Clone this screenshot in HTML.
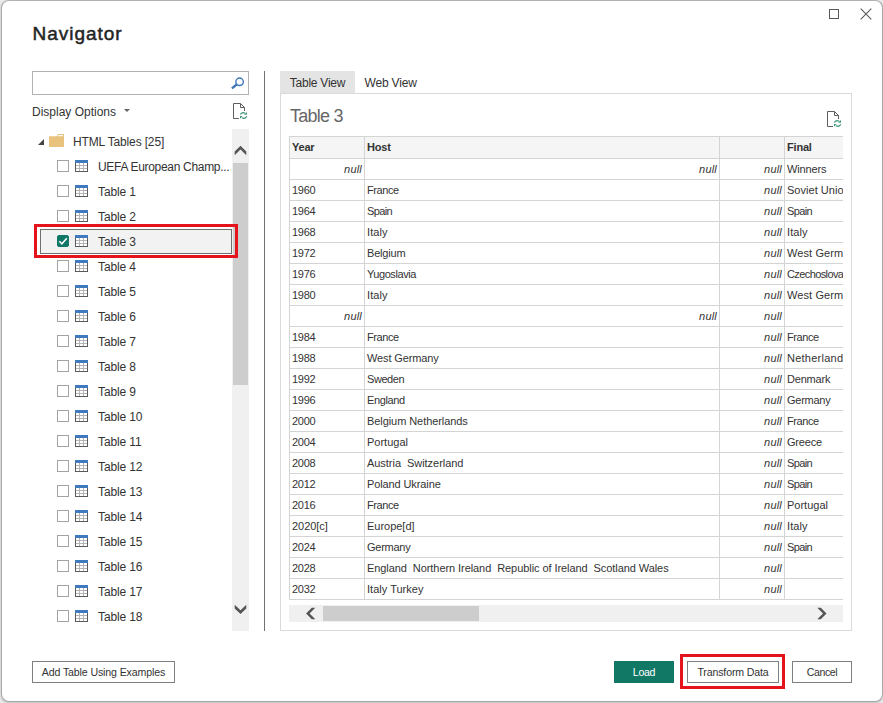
<!DOCTYPE html>
<html lang="en"><head><meta charset="utf-8"><title>Navigator</title>
<style>
html,body{margin:0;padding:0;}
body{width:883px;height:703px;overflow:hidden;background:#ececec;font-family:"Liberation Sans",sans-serif;font-size:12px;color:#333;position:relative;}
.win{position:absolute;left:1px;top:0;width:880px;height:700px;background:#fff;border:1px solid #a9a9a9;border-top-color:#b2b2b2;border-radius:8px;box-shadow:0 1px 3px rgba(0,0,0,.22);}
.c{position:absolute;left:0;top:0;width:883px;height:703px;}
.c>*{position:absolute;}
.title{left:32.6px;top:22px;font-size:19px;line-height:24px;color:#252525;letter-spacing:0.95px;-webkit-text-stroke:0.5px #252525;}
.maxi{left:829px;top:9px;}
.closei{left:860px;top:8px;}
.search{left:32px;top:71px;width:215px;height:22px;border:1px solid #b2b2b2;background:#fff;}
.search svg{position:absolute;left:197px;top:4px;}
.dispopt{left:32px;top:104px;line-height:16px;font-size:12px;color:#333;letter-spacing:0;}
.caret{left:123.5px;top:109px;width:0;height:0;border-left:3px solid transparent;border-right:3px solid transparent;border-top:3px solid #666;}
.refresh1{left:233px;top:103px;}
.tri{left:38px;top:139px;width:0;height:0;border-left:6px solid transparent;border-bottom:6px solid #444;}
.folder{left:49px;top:134px;}
.tl{line-height:24px;font-size:12px;color:#333;white-space:nowrap;letter-spacing:-0.12px;}
.cb{left:57px;width:10px;height:10px;border:1px solid #a3a3a3;background:#fff;}
.cb.on{background:#117865;border-color:#117865;border-radius:2px;}
.cb svg{position:absolute;left:-1px;top:-1px;}
.ti{left:75px;}
.selred{left:34px;top:224px;width:198px;height:28px;border:3px solid #e5141c;z-index:5;}
.selbg{left:40px;top:229px;width:190px;height:23px;border:1px solid #6f6f6f;background:#f2f2f2;}
.vsb{left:232px;top:129px;width:17px;height:502px;background:#f0f0f0;}
.vthumb{position:absolute;left:1px;top:34px;width:15px;height:222px;background:#cdcdcd;}
.vup{position:absolute;left:2px;top:16px;}
.vdn{position:absolute;left:2px;top:475px;}
.vdiv{left:264px;top:71px;width:1px;height:560px;background:#707070;}
.tab1{left:280px;top:71px;width:75px;height:22px;background:#e4e4e4;line-height:25px;text-align:center;font-size:12px;color:#333;letter-spacing:-0.25px;}
.tab2{left:364.5px;top:71px;height:22px;line-height:25px;font-size:12px;color:#333;letter-spacing:-0.18px;}
.panel{left:280px;top:93px;width:570px;height:536px;border:1px solid #dadada;}
.ptitle{left:290px;top:104px;font-size:18px;line-height:24px;color:#666;letter-spacing:-0.76px;}
.refresh2{left:827px;top:111px;}
.grid{left:289px;top:136px;width:554px;height:464px;overflow:hidden;}
.grid table{border-collapse:collapse;table-layout:fixed;width:640px;}
.grid th,.grid td{border:1px solid #d4d4d4;height:20px;padding:0 2px;font-size:11px;letter-spacing:-0.2px;line-height:20px;white-space:nowrap;overflow:hidden;text-align:left;color:#333;font-weight:normal;}
.grid th{background:#f5f5f5;font-weight:bold;height:21px;line-height:21px;}
.grid .c1{width:70px;}.grid .c2{width:350px;}.grid .c3{width:60px;}.grid .c4{width:140px;}
.grid td.n{text-align:right;font-style:italic;letter-spacing:0.2px;padding-right:2px;}
.hsb{left:289px;top:605px;width:554px;height:17px;background:#f0f0f0;}
.hthumb{position:absolute;left:34px;top:1px;width:156px;height:15px;background:#cdcdcd;}
.hl{position:absolute;left:17px;top:2px;}
.hr{position:absolute;left:528px;top:2px;}
.btn{top:661px;height:22px;border:1px solid #7f7f7f;background:#fff;line-height:20px;text-align:center;font-size:10.6px;letter-spacing:-0.45px;color:#333;white-space:nowrap;box-sizing:border-box;}
.btn.load{background:#117865;border-color:#117865;color:#fff;}
.redbox{left:680px;top:654px;width:99px;height:29px;border:3px solid #e5141c;}

</style></head>
<body>
<div class="win"></div>
<div class="c">
<div class="title">Navigator</div>
<svg class="maxi" width="11" height="11" viewBox="0 0 11 11"><rect x="0.5" y="0.5" width="9" height="9" fill="none" stroke="#5a5a5a" stroke-width="1"/></svg>
<svg class="closei" width="12" height="12" viewBox="0 0 12 12"><path d="M0.7 0.7 L11.3 11.3 M11.3 0.7 L0.7 11.3" fill="none" stroke="#5a5a5a" stroke-width="1.1"/></svg>
<div class="search"><svg width="18" height="14" viewBox="0 0 18 14"><circle cx="9.6" cy="5.8" r="3.75" fill="none" stroke="#3d78b8" stroke-width="1.4"/><path d="M6.7 8.5 L1.9 12.3" stroke="#3d78b8" stroke-width="2.3" stroke-linecap="butt"/></svg></div>
<div class="dispopt">Display Options</div><div class="caret"></div>
<svg class="refresh1" width="16" height="17" viewBox="0 0 16 17"><path d="M5.9 15.5 H0.5 V0.5 H7.5 L11.5 4.5 V8" fill="none" stroke="#5e5e5e" stroke-width="1"/><path d="M7.5 0.5 V4.5 H11.5" fill="none" stroke="#5e5e5e" stroke-width="1"/><path d="M7.3 11.5 Q9.3 8.5 12.2 10.2" fill="none" stroke="#3f9877" stroke-width="1.2"/><path d="M14 9 V11.7 H11.1 Z" fill="#3f9877"/><path d="M13.8 13.3 Q11.8 16.3 8.9 14.7" fill="none" stroke="#3f9877" stroke-width="1.2"/><path d="M7 15.8 V13.1 H9.7 Z" fill="#3f9877"/></svg>
<div class="tri"></div>
<svg class="folder" width="15" height="13" viewBox="0 0 15 13"><path d="M0 2.3 H8 L9 0 H15 V13 H0 Z" fill="#e9c27e"/><path d="M9.6 1 H14 V2.3 H9 Z" fill="#fff"/></svg>
<div class="tl" style="left:73px;top:130px;letter-spacing:-0.14px">HTML Tables [25]</div>
<div class="cb" style="top:160px"></div>
<svg class="ti" style="top:160px" width="13" height="12" viewBox="0 0 13 12"><rect x="0" y="0" width="13" height="12" fill="#5a5a5a"/><rect x="1" y="3" width="11" height="8" fill="#b4b4b4"/><rect x="0" y="0" width="13" height="3" fill="#3f7abf"/><path d="M1 3h3v2h-3z M5 3h3v2h-3z M9 3h3v2h-3z M1 6h3v2h-3z M5 6h3v2h-3z M9 6h3v2h-3z M1 9h3v2h-3z M5 9h3v2h-3z M9 9h3v2h-3z" fill="#fff"/></svg>
<div class="tl" style="left:98px;top:155px;letter-spacing:-0.31px">UEFA European Champ...</div>
<div class="cb" style="top:185px"></div>
<svg class="ti" style="top:185px" width="13" height="12" viewBox="0 0 13 12"><rect x="0" y="0" width="13" height="12" fill="#5a5a5a"/><rect x="1" y="3" width="11" height="8" fill="#b4b4b4"/><rect x="0" y="0" width="13" height="3" fill="#3f7abf"/><path d="M1 3h3v2h-3z M5 3h3v2h-3z M9 3h3v2h-3z M1 6h3v2h-3z M5 6h3v2h-3z M9 6h3v2h-3z M1 9h3v2h-3z M5 9h3v2h-3z M9 9h3v2h-3z" fill="#fff"/></svg>
<div class="tl" style="left:98px;top:180px">Table 1</div>
<div class="cb" style="top:210px"></div>
<svg class="ti" style="top:210px" width="13" height="12" viewBox="0 0 13 12"><rect x="0" y="0" width="13" height="12" fill="#5a5a5a"/><rect x="1" y="3" width="11" height="8" fill="#b4b4b4"/><rect x="0" y="0" width="13" height="3" fill="#3f7abf"/><path d="M1 3h3v2h-3z M5 3h3v2h-3z M9 3h3v2h-3z M1 6h3v2h-3z M5 6h3v2h-3z M9 6h3v2h-3z M1 9h3v2h-3z M5 9h3v2h-3z M9 9h3v2h-3z" fill="#fff"/></svg>
<div class="tl" style="left:98px;top:205px">Table 2</div>
<div class="selred"></div><div class="selbg"></div>
<div class="cb on" style="top:235px"><svg width="12" height="12" viewBox="0 0 12 12"><path d="M2.3 6.2 L4.9 8.8 L9.8 3.2" fill="none" stroke="#fff" stroke-width="1.5"/></svg></div>
<svg class="ti" style="top:235px" width="13" height="12" viewBox="0 0 13 12"><rect x="0" y="0" width="13" height="12" fill="#5a5a5a"/><rect x="1" y="3" width="11" height="8" fill="#b4b4b4"/><rect x="0" y="0" width="13" height="3" fill="#3f7abf"/><path d="M1 3h3v2h-3z M5 3h3v2h-3z M9 3h3v2h-3z M1 6h3v2h-3z M5 6h3v2h-3z M9 6h3v2h-3z M1 9h3v2h-3z M5 9h3v2h-3z M9 9h3v2h-3z" fill="#fff"/></svg>
<div class="tl" style="left:98px;top:230px">Table 3</div>
<div class="cb" style="top:260px"></div>
<svg class="ti" style="top:260px" width="13" height="12" viewBox="0 0 13 12"><rect x="0" y="0" width="13" height="12" fill="#5a5a5a"/><rect x="1" y="3" width="11" height="8" fill="#b4b4b4"/><rect x="0" y="0" width="13" height="3" fill="#3f7abf"/><path d="M1 3h3v2h-3z M5 3h3v2h-3z M9 3h3v2h-3z M1 6h3v2h-3z M5 6h3v2h-3z M9 6h3v2h-3z M1 9h3v2h-3z M5 9h3v2h-3z M9 9h3v2h-3z" fill="#fff"/></svg>
<div class="tl" style="left:98px;top:255px">Table 4</div>
<div class="cb" style="top:285px"></div>
<svg class="ti" style="top:285px" width="13" height="12" viewBox="0 0 13 12"><rect x="0" y="0" width="13" height="12" fill="#5a5a5a"/><rect x="1" y="3" width="11" height="8" fill="#b4b4b4"/><rect x="0" y="0" width="13" height="3" fill="#3f7abf"/><path d="M1 3h3v2h-3z M5 3h3v2h-3z M9 3h3v2h-3z M1 6h3v2h-3z M5 6h3v2h-3z M9 6h3v2h-3z M1 9h3v2h-3z M5 9h3v2h-3z M9 9h3v2h-3z" fill="#fff"/></svg>
<div class="tl" style="left:98px;top:280px">Table 5</div>
<div class="cb" style="top:310px"></div>
<svg class="ti" style="top:310px" width="13" height="12" viewBox="0 0 13 12"><rect x="0" y="0" width="13" height="12" fill="#5a5a5a"/><rect x="1" y="3" width="11" height="8" fill="#b4b4b4"/><rect x="0" y="0" width="13" height="3" fill="#3f7abf"/><path d="M1 3h3v2h-3z M5 3h3v2h-3z M9 3h3v2h-3z M1 6h3v2h-3z M5 6h3v2h-3z M9 6h3v2h-3z M1 9h3v2h-3z M5 9h3v2h-3z M9 9h3v2h-3z" fill="#fff"/></svg>
<div class="tl" style="left:98px;top:305px">Table 6</div>
<div class="cb" style="top:335px"></div>
<svg class="ti" style="top:335px" width="13" height="12" viewBox="0 0 13 12"><rect x="0" y="0" width="13" height="12" fill="#5a5a5a"/><rect x="1" y="3" width="11" height="8" fill="#b4b4b4"/><rect x="0" y="0" width="13" height="3" fill="#3f7abf"/><path d="M1 3h3v2h-3z M5 3h3v2h-3z M9 3h3v2h-3z M1 6h3v2h-3z M5 6h3v2h-3z M9 6h3v2h-3z M1 9h3v2h-3z M5 9h3v2h-3z M9 9h3v2h-3z" fill="#fff"/></svg>
<div class="tl" style="left:98px;top:330px">Table 7</div>
<div class="cb" style="top:360px"></div>
<svg class="ti" style="top:360px" width="13" height="12" viewBox="0 0 13 12"><rect x="0" y="0" width="13" height="12" fill="#5a5a5a"/><rect x="1" y="3" width="11" height="8" fill="#b4b4b4"/><rect x="0" y="0" width="13" height="3" fill="#3f7abf"/><path d="M1 3h3v2h-3z M5 3h3v2h-3z M9 3h3v2h-3z M1 6h3v2h-3z M5 6h3v2h-3z M9 6h3v2h-3z M1 9h3v2h-3z M5 9h3v2h-3z M9 9h3v2h-3z" fill="#fff"/></svg>
<div class="tl" style="left:98px;top:355px">Table 8</div>
<div class="cb" style="top:385px"></div>
<svg class="ti" style="top:385px" width="13" height="12" viewBox="0 0 13 12"><rect x="0" y="0" width="13" height="12" fill="#5a5a5a"/><rect x="1" y="3" width="11" height="8" fill="#b4b4b4"/><rect x="0" y="0" width="13" height="3" fill="#3f7abf"/><path d="M1 3h3v2h-3z M5 3h3v2h-3z M9 3h3v2h-3z M1 6h3v2h-3z M5 6h3v2h-3z M9 6h3v2h-3z M1 9h3v2h-3z M5 9h3v2h-3z M9 9h3v2h-3z" fill="#fff"/></svg>
<div class="tl" style="left:98px;top:380px">Table 9</div>
<div class="cb" style="top:410px"></div>
<svg class="ti" style="top:410px" width="13" height="12" viewBox="0 0 13 12"><rect x="0" y="0" width="13" height="12" fill="#5a5a5a"/><rect x="1" y="3" width="11" height="8" fill="#b4b4b4"/><rect x="0" y="0" width="13" height="3" fill="#3f7abf"/><path d="M1 3h3v2h-3z M5 3h3v2h-3z M9 3h3v2h-3z M1 6h3v2h-3z M5 6h3v2h-3z M9 6h3v2h-3z M1 9h3v2h-3z M5 9h3v2h-3z M9 9h3v2h-3z" fill="#fff"/></svg>
<div class="tl" style="left:98px;top:405px">Table 10</div>
<div class="cb" style="top:435px"></div>
<svg class="ti" style="top:435px" width="13" height="12" viewBox="0 0 13 12"><rect x="0" y="0" width="13" height="12" fill="#5a5a5a"/><rect x="1" y="3" width="11" height="8" fill="#b4b4b4"/><rect x="0" y="0" width="13" height="3" fill="#3f7abf"/><path d="M1 3h3v2h-3z M5 3h3v2h-3z M9 3h3v2h-3z M1 6h3v2h-3z M5 6h3v2h-3z M9 6h3v2h-3z M1 9h3v2h-3z M5 9h3v2h-3z M9 9h3v2h-3z" fill="#fff"/></svg>
<div class="tl" style="left:98px;top:430px">Table 11</div>
<div class="cb" style="top:460px"></div>
<svg class="ti" style="top:460px" width="13" height="12" viewBox="0 0 13 12"><rect x="0" y="0" width="13" height="12" fill="#5a5a5a"/><rect x="1" y="3" width="11" height="8" fill="#b4b4b4"/><rect x="0" y="0" width="13" height="3" fill="#3f7abf"/><path d="M1 3h3v2h-3z M5 3h3v2h-3z M9 3h3v2h-3z M1 6h3v2h-3z M5 6h3v2h-3z M9 6h3v2h-3z M1 9h3v2h-3z M5 9h3v2h-3z M9 9h3v2h-3z" fill="#fff"/></svg>
<div class="tl" style="left:98px;top:455px">Table 12</div>
<div class="cb" style="top:485px"></div>
<svg class="ti" style="top:485px" width="13" height="12" viewBox="0 0 13 12"><rect x="0" y="0" width="13" height="12" fill="#5a5a5a"/><rect x="1" y="3" width="11" height="8" fill="#b4b4b4"/><rect x="0" y="0" width="13" height="3" fill="#3f7abf"/><path d="M1 3h3v2h-3z M5 3h3v2h-3z M9 3h3v2h-3z M1 6h3v2h-3z M5 6h3v2h-3z M9 6h3v2h-3z M1 9h3v2h-3z M5 9h3v2h-3z M9 9h3v2h-3z" fill="#fff"/></svg>
<div class="tl" style="left:98px;top:480px">Table 13</div>
<div class="cb" style="top:510px"></div>
<svg class="ti" style="top:510px" width="13" height="12" viewBox="0 0 13 12"><rect x="0" y="0" width="13" height="12" fill="#5a5a5a"/><rect x="1" y="3" width="11" height="8" fill="#b4b4b4"/><rect x="0" y="0" width="13" height="3" fill="#3f7abf"/><path d="M1 3h3v2h-3z M5 3h3v2h-3z M9 3h3v2h-3z M1 6h3v2h-3z M5 6h3v2h-3z M9 6h3v2h-3z M1 9h3v2h-3z M5 9h3v2h-3z M9 9h3v2h-3z" fill="#fff"/></svg>
<div class="tl" style="left:98px;top:505px">Table 14</div>
<div class="cb" style="top:535px"></div>
<svg class="ti" style="top:535px" width="13" height="12" viewBox="0 0 13 12"><rect x="0" y="0" width="13" height="12" fill="#5a5a5a"/><rect x="1" y="3" width="11" height="8" fill="#b4b4b4"/><rect x="0" y="0" width="13" height="3" fill="#3f7abf"/><path d="M1 3h3v2h-3z M5 3h3v2h-3z M9 3h3v2h-3z M1 6h3v2h-3z M5 6h3v2h-3z M9 6h3v2h-3z M1 9h3v2h-3z M5 9h3v2h-3z M9 9h3v2h-3z" fill="#fff"/></svg>
<div class="tl" style="left:98px;top:530px">Table 15</div>
<div class="cb" style="top:560px"></div>
<svg class="ti" style="top:560px" width="13" height="12" viewBox="0 0 13 12"><rect x="0" y="0" width="13" height="12" fill="#5a5a5a"/><rect x="1" y="3" width="11" height="8" fill="#b4b4b4"/><rect x="0" y="0" width="13" height="3" fill="#3f7abf"/><path d="M1 3h3v2h-3z M5 3h3v2h-3z M9 3h3v2h-3z M1 6h3v2h-3z M5 6h3v2h-3z M9 6h3v2h-3z M1 9h3v2h-3z M5 9h3v2h-3z M9 9h3v2h-3z" fill="#fff"/></svg>
<div class="tl" style="left:98px;top:555px">Table 16</div>
<div class="cb" style="top:585px"></div>
<svg class="ti" style="top:585px" width="13" height="12" viewBox="0 0 13 12"><rect x="0" y="0" width="13" height="12" fill="#5a5a5a"/><rect x="1" y="3" width="11" height="8" fill="#b4b4b4"/><rect x="0" y="0" width="13" height="3" fill="#3f7abf"/><path d="M1 3h3v2h-3z M5 3h3v2h-3z M9 3h3v2h-3z M1 6h3v2h-3z M5 6h3v2h-3z M9 6h3v2h-3z M1 9h3v2h-3z M5 9h3v2h-3z M9 9h3v2h-3z" fill="#fff"/></svg>
<div class="tl" style="left:98px;top:580px">Table 17</div>
<div class="cb" style="top:610px"></div>
<svg class="ti" style="top:610px" width="13" height="12" viewBox="0 0 13 12"><rect x="0" y="0" width="13" height="12" fill="#5a5a5a"/><rect x="1" y="3" width="11" height="8" fill="#b4b4b4"/><rect x="0" y="0" width="13" height="3" fill="#3f7abf"/><path d="M1 3h3v2h-3z M5 3h3v2h-3z M9 3h3v2h-3z M1 6h3v2h-3z M5 6h3v2h-3z M9 6h3v2h-3z M1 9h3v2h-3z M5 9h3v2h-3z M9 9h3v2h-3z" fill="#fff"/></svg>
<div class="tl" style="left:98px;top:605px">Table 18</div>
<div class="vsb"><div class="vthumb"></div><svg class="vup" width="13" height="11" viewBox="0 0 13 11"><path d="M0.7 6.5 L6.5 0.7 L12.3 6.5 V10.2 L6.5 4.5 L0.7 10.2 Z" fill="#555"/></svg><svg class="vdn" width="13" height="11" viewBox="0 0 13 11"><path d="M0.7 0.7 L6.5 6.3 L12.3 0.7 V4.4 L6.5 10 L0.7 4.4 Z" fill="#555"/></svg></div>
<div class="vdiv"></div>
<div class="tab1">Table View</div><div class="tab2">Web View</div>
<div class="panel"></div>
<div class="ptitle">Table 3</div>
<svg class="refresh2" width="16" height="17" viewBox="0 0 16 17"><path d="M5.9 15.5 H0.5 V0.5 H7.5 L11.5 4.5 V8" fill="none" stroke="#5e5e5e" stroke-width="1"/><path d="M7.5 0.5 V4.5 H11.5" fill="none" stroke="#5e5e5e" stroke-width="1"/><path d="M7.3 11.5 Q9.3 8.5 12.2 10.2" fill="none" stroke="#3f9877" stroke-width="1.2"/><path d="M14 9 V11.7 H11.1 Z" fill="#3f9877"/><path d="M13.8 13.3 Q11.8 16.3 8.9 14.7" fill="none" stroke="#3f9877" stroke-width="1.2"/><path d="M7 15.8 V13.1 H9.7 Z" fill="#3f9877"/></svg>
<div class="grid"><table><thead><tr><th class="c1">Year</th><th class="c2">Host</th><th class="c3"></th><th class="c4">Final</th></tr></thead><tbody>
<tr><td class="c1 n">null</td><td class="c2 n">null</td><td class="c3 n">null</td><td class="c4" style="letter-spacing:-0.16px">Winners</td></tr>
<tr><td class="c1" style="letter-spacing:-0.25px">1960</td><td class="c2" style="letter-spacing:-0.42px">France</td><td class="c3 n">null</td><td class="c4" style="letter-spacing:0.03px">Soviet Union</td></tr>
<tr><td class="c1" style="letter-spacing:-0.25px">1964</td><td class="c2" style="letter-spacing:-0.63px">Spain</td><td class="c3 n">null</td><td class="c4" style="letter-spacing:-0.63px">Spain</td></tr>
<tr><td class="c1" style="letter-spacing:-0.25px">1968</td><td class="c2" style="letter-spacing:0.11px">Italy</td><td class="c3 n">null</td><td class="c4" style="letter-spacing:0.11px">Italy</td></tr>
<tr><td class="c1" style="letter-spacing:-0.25px">1972</td><td class="c2" style="letter-spacing:-0.18px">Belgium</td><td class="c3 n">null</td><td class="c4" style="letter-spacing:0.1px">West Germany</td></tr>
<tr><td class="c1" style="letter-spacing:-0.25px">1976</td><td class="c2" style="letter-spacing:-0.43px">Yugoslavia</td><td class="c3 n">null</td><td class="c4" style="letter-spacing:-0.6px">Czechoslovakia</td></tr>
<tr><td class="c1" style="letter-spacing:-0.25px">1980</td><td class="c2" style="letter-spacing:0.11px">Italy</td><td class="c3 n">null</td><td class="c4" style="letter-spacing:0.1px">West Germany</td></tr>
<tr><td class="c1 n">null</td><td class="c2 n">null</td><td class="c3 n">null</td><td class="c4"></td></tr>
<tr><td class="c1" style="letter-spacing:-0.25px">1984</td><td class="c2" style="letter-spacing:-0.42px">France</td><td class="c3 n">null</td><td class="c4" style="letter-spacing:-0.42px">France</td></tr>
<tr><td class="c1" style="letter-spacing:-0.25px">1988</td><td class="c2" style="letter-spacing:-0.13px">West Germany</td><td class="c3 n">null</td><td class="c4" style="letter-spacing:0.25px">Netherlands</td></tr>
<tr><td class="c1" style="letter-spacing:-0.25px">1992</td><td class="c2" style="letter-spacing:-0.43px">Sweden</td><td class="c3 n">null</td><td class="c4">Denmark</td></tr>
<tr><td class="c1" style="letter-spacing:-0.25px">1996</td><td class="c2" style="letter-spacing:-0.36px">England</td><td class="c3 n">null</td><td class="c4" style="letter-spacing:-0.26px">Germany</td></tr>
<tr><td class="c1" style="letter-spacing:-0.25px">2000</td><td class="c2" style="letter-spacing:-0.07px">Belgium Netherlands</td><td class="c3 n">null</td><td class="c4" style="letter-spacing:-0.42px">France</td></tr>
<tr><td class="c1" style="letter-spacing:-0.25px">2004</td><td class="c2" style="letter-spacing:-0px">Portugal</td><td class="c3 n">null</td><td class="c4">Greece</td></tr>
<tr><td class="c1" style="letter-spacing:-0.25px">2008</td><td class="c2" style="letter-spacing:-0.04px">Austria&nbsp; Switzerland</td><td class="c3 n">null</td><td class="c4" style="letter-spacing:-0.63px">Spain</td></tr>
<tr><td class="c1" style="letter-spacing:-0.25px">2012</td><td class="c2" style="letter-spacing:-0.11px">Poland Ukraine</td><td class="c3 n">null</td><td class="c4" style="letter-spacing:-0.63px">Spain</td></tr>
<tr><td class="c1" style="letter-spacing:-0.25px">2016</td><td class="c2" style="letter-spacing:-0.42px">France</td><td class="c3 n">null</td><td class="c4" style="letter-spacing:-0px">Portugal</td></tr>
<tr><td class="c1" style="letter-spacing:-0.05px">2020[c]</td><td class="c2" style="letter-spacing:-0.02px">Europe[d]</td><td class="c3 n">null</td><td class="c4" style="letter-spacing:0.11px">Italy</td></tr>
<tr><td class="c1" style="letter-spacing:-0.25px">2024</td><td class="c2" style="letter-spacing:-0.26px">Germany</td><td class="c3 n">null</td><td class="c4" style="letter-spacing:-0.63px">Spain</td></tr>
<tr><td class="c1" style="letter-spacing:-0.25px">2028</td><td class="c2" style="letter-spacing:-0.07px">England&nbsp; Northern Ireland&nbsp; Republic of Ireland&nbsp; Scotland Wales</td><td class="c3 n">null</td><td class="c4"></td></tr>
<tr><td class="c1" style="letter-spacing:-0.25px">2032</td><td class="c2" style="letter-spacing:0.02px">Italy Turkey</td><td class="c3 n">null</td><td class="c4"></td></tr>
</tbody></table></div>
<div class="hsb"><div class="hthumb"></div><svg class="hl" width="10" height="13" viewBox="0 0 10 13"><path d="M0.1 6.5 L5.8 0.8 H9.3 L3.6 6.5 L9.3 12.2 H5.8 Z" fill="#555"/></svg><svg class="hr" width="10" height="13" viewBox="0 0 10 13"><path d="M9.5 6.5 L3.8 0.8 H0.3 L6 6.5 L0.3 12.2 H3.8 Z" fill="#555"/></svg></div>
<div class="btn" style="left:32px;width:143px;letter-spacing:-0.13px">Add Table Using Examples</div>
<div class="btn load" style="left:614px;width:60px;letter-spacing:-0.3px">Load</div>
<div class="redbox"></div>
<div class="btn" style="left:687px;width:92px;letter-spacing:-0.15px">Transform Data</div>
<div class="btn" style="left:792px;width:60px">Cancel</div>
</div>
</body></html>
